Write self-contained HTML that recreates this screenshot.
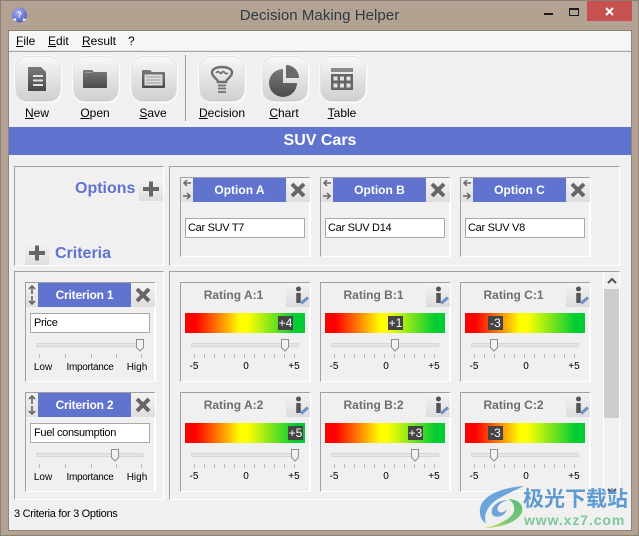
<!DOCTYPE html>
<html><head><meta charset="utf-8">
<style>
html,body{margin:0;padding:0}
body{width:639px;height:536px;position:relative;overflow:hidden;background:#b3a292;font-family:"Liberation Sans","Noto Sans CJK SC",sans-serif;font-size:12px;color:#000}
div,span,svg{position:absolute;box-sizing:border-box}
u{text-decoration:underline}
.tb{width:46px;height:46px;top:56px;border-radius:12px;background:linear-gradient(#f7f7f7,#cfcfd2);border:1px solid #e4e4e4;box-shadow:1px 1px 1px #fff,0 0 0 1px #fafafa}
.tl{top:106px;line-height:14px;white-space:nowrap;transform:translateX(-50%);font-size:12px}
.pn{border-top:1px solid #a0a0a0;border-left:1px solid #a0a0a0;border-right:1px solid #fff;border-bottom:1px solid #fff}
.cd{width:131px;height:100px;border-top:1px solid #a0a0a0;border-left:1px solid #a0a0a0;border-right:2px solid #fff;border-bottom:1px solid #fff}
.hd{left:12px;top:0;width:93px;height:24px;background:#6073cf;color:#fff;font-weight:bold;font-size:12px;text-align:center;line-height:24px}
.ar{left:0;top:0;width:12px;height:24px;background:linear-gradient(#f0f0f0,#e0e0e0)}
.xb{left:105px;top:0;width:24px;height:24px;background:linear-gradient(#f4f4f4,#dedede)}
.in{left:4px;width:120px;height:20px;background:#fff;border:1px solid #a8a8a8;line-height:18px;padding-left:2px;font-size:11px;letter-spacing:-.3px;white-space:nowrap}
.ti{left:0;top:5px;width:105px;text-align:center;font-weight:bold;font-size:12px;color:#6e6e6e;line-height:14px}
.ib{left:105px;top:0;width:24px;height:24px;background:linear-gradient(#f4f4f4,#dcdce0)}
.gr{left:4px;top:30px;width:120px;height:20px;background:linear-gradient(90deg,#f00 9%,#ff8000 28%,#ff0 46%,#ff0 52%,#00cc33 92%)}
.vl{top:3px;width:15px;height:14px;background:#444;color:#fff;font-size:12px;line-height:14px;text-align:center}
.st{height:4px;background:#e4e6e6;border:1px solid #d6d8d8;top:60px}
.sm{top:78px;font-size:10px;line-height:12px;white-space:nowrap;transform:translateX(-50%)}
.cl{top:79px}
</style></head>
<body>
<!-- title bar -->
<div style="left:0;top:0;width:639px;height:1px;background:#8c8074"></div>
<div style="left:0;top:0;width:1px;height:536px;background:#8c8074"></div>
<div style="left:638px;top:0;width:1px;height:536px;background:#8c8074"></div>
<div style="left:0;top:535px;width:639px;height:1px;background:#8c8074"></div>
<svg style="left:11px;top:7px" width="17" height="17" viewBox="0 0 17 17"><defs><radialGradient id="g" cx=".4" cy=".3" r=".8"><stop offset="0" stop-color="#aab0ee"/><stop offset="1" stop-color="#4a52bc"/></radialGradient></defs><circle cx="8.500" cy="8" r="7.500" fill="url(#g)"/><path d="M1.500 13l3-2 1 3zM15.500 13l-3-2-1 3z" fill="#fff"/><text x="8.500" y="10.500" font-size="8" font-weight="bold" fill="#fff" text-anchor="middle" font-family="Liberation Sans">?</text></svg>
<div style="left:0;top:7px;width:639px;text-align:center;font-size:15px;line-height:18px;color:#2d3b46;letter-spacing:.05px">Decision Making Helper</div>
<div style="left:544px;top:13px;width:9px;height:2px;background:#1c1c1c"></div>
<div style="left:569px;top:8px;width:10px;height:8px;border:1px solid #1c1c1c;border-top-width:2px"></div>
<div style="left:587px;top:1px;width:45px;height:20px;background:#c75050"></div>
<svg style="left:605px;top:7px" width="9" height="9" viewBox="0 0 9 9"><path d="M1 1l7 7M8 1l-7 7" stroke="#fff" stroke-width="2"/></svg>

<!-- client -->
<div style="left:9px;top:31px;width:622px;height:499px;background:#f0f0f0"></div>
<div style="left:8px;top:30px;width:1px;height:501px;background:#8f8478"></div>
<div style="left:631px;top:30px;width:1px;height:501px;background:#8f8478"></div>
<div style="left:8px;top:30px;width:624px;height:1px;background:#8f8478"></div>
<div style="left:8px;top:530px;width:624px;height:1px;background:#8f8478"></div>
<div style="left:9px;top:31px;width:622px;height:19px;background:#f5f6f8"></div>
<div style="left:9px;top:50px;width:622px;height:1px;background:#e6e6e6"></div>
<div style="left:9px;top:51px;width:622px;height:1px;background:#a4a4a4"></div>
<span style="left:16px;top:34px;line-height:14px"><u>F</u>ile</span>
<span style="left:48px;top:34px;line-height:14px"><u>E</u>dit</span>
<span style="left:82px;top:34px;line-height:14px"><u>R</u>esult</span>
<span style="left:128px;top:34px;line-height:14px">?</span>

<!-- toolbar -->
<div class="tb" style="left:15px"><svg style="left:-1px;top:-1px" width="46" height="46" viewBox="0 0 46 46"><defs><linearGradient id="d" x1="0" y1="0" x2="0" y2="1"><stop offset="0" stop-color="#7a7a7a"/><stop offset="1" stop-color="#4a4a4a"/></linearGradient></defs><path d="M13 11h13l5 5v19H13z" fill="url(#d)"/><path d="M18 20h10M18 24.500h10M18 29h10" stroke="#e2e2e2" stroke-width="2"/></svg></div>
<div class="tb" style="left:73px"><svg style="left:-1px;top:-1px" width="46" height="46" viewBox="0 0 46 46"><path d="M10 15q0-1 1-1h8l2 2h12q1 0 1 1v14q0 1-1 1H11q-1 0-1-1z" fill="url(#d)"/><path d="M12 16.500h7" stroke="#999" stroke-width="1"/></svg></div>
<div class="tb" style="left:131px"><svg style="left:-1px;top:-1px" width="46" height="46" viewBox="0 0 46 46"><path d="M11 15q0-1 1-1h7l2 2h12q1 0 1 1v14q0 1-1 1H12q-1 0-1-1z" fill="url(#d)"/><rect x="13.500" y="18.500" width="18" height="11" fill="#e0e0e0"/><path d="M15 21h15M15 24h15M15 27h15" stroke="#999" stroke-width="1"/></svg></div>
<div style="left:185px;top:55px;width:1px;height:66px;background:#9a9a9a"></div>
<div class="tb" style="left:199px"><svg style="left:-1px;top:-1px" width="46" height="46" viewBox="0 0 46 46"><path d="M19 26c0-3-6-5-6-9.500 0-3.500 4.500-5.500 10-5.500s10 2 10 5.500c0 4.500-6 6.500-6 9.500z" fill="none" stroke="#707070" stroke-width="2.400"/><path d="M17 17q2-2.500 3.500-.5t2.500 0 2.500 0 3.500.5" fill="none" stroke="#707070" stroke-width="1.700"/><path d="M19 29.500h8M19 32.500h8M19 36h8" stroke="#707070" stroke-width="1.800"/></svg></div>
<div class="tb" style="left:262px"><svg style="left:-1px;top:-1px" width="46" height="46" viewBox="0 0 46 46"><path d="M21 13a14 14 0 1 0 14 14H21z" fill="url(#d)"/><path d="M24 9a13 13 0 0 1 13 13H24z" fill="#6a6a6a"/></svg></div>
<div class="tb" style="left:320px"><svg style="left:-1px;top:-1px" width="46" height="46" viewBox="0 0 46 46"><rect x="11" y="12" width="22" height="4" fill="#8a8a8a"/><rect x="11" y="18" width="22" height="16" fill="#666"/><path d="M13.500 20.500h4v4h-4zM20 20.500h4v4h-4zM26.500 20.500h4v4h-4zM13.500 27.500h4v4h-4zM20 27.500h4v4h-4zM26.500 27.500h4v4h-4z" fill="#e2e2e2"/></svg></div>
<span class="tl" style="left:37px"><u>N</u>ew</span>
<span class="tl" style="left:95px"><u>O</u>pen</span>
<span class="tl" style="left:153px"><u>S</u>ave</span>
<span class="tl" style="left:222px"><u>D</u>ecision</span>
<span class="tl" style="left:284px"><u>C</u>hart</span>
<span class="tl" style="left:342px"><u>T</u>able</span>

<!-- heading -->
<div style="left:9px;top:127px;width:622px;height:28px;background:#6073cf;color:#fff;font-weight:bold;font-size:16px;line-height:27px;text-align:center">SUV Cars</div>

<!-- panels -->
<div class="pn" style="left:14px;top:166px;width:150px;height:100px"></div>
<div class="pn" style="left:169px;top:166px;width:451px;height:100px"></div>
<div class="pn" style="left:14px;top:271px;width:150px;height:229px"></div>
<div class="pn" style="left:169px;top:271px;width:451px;height:229px"></div>
<div style="left:603px;top:272px;width:1px;height:227px;background:#fff"></div>

<span style="left:75px;top:179px;font-size:16px;font-weight:bold;color:#6073cf;line-height:19px">Options</span>
<div style="left:139px;top:177px;width:24px;height:24px;background:linear-gradient(#f4f4f4,#dedede)"><svg style="left:0;top:0" width="24" height="24"><path d="M12 4.500v15M4 12h16" stroke="#666" stroke-width="4"/></svg></div>
<div style="left:25px;top:241px;width:24px;height:24px;background:linear-gradient(#f4f4f4,#dedede)"><svg style="left:0;top:0" width="24" height="24"><path d="M12 4.500v15M4 12h16" stroke="#666" stroke-width="4"/></svg></div>
<span style="left:55px;top:244px;font-size:16px;font-weight:bold;color:#6073cf;line-height:19px">Criteria</span>

<!-- reusable symbols -->
<svg width="0" height="0" style="left:0;top:0"><defs>
<g id="trk"><path d="M13.500 71v4M23.500 71v4M33.500 71v4M43.500 71v4M53.500 71v4M63.500 71v4M73.500 71v4M83.500 71v4M93.500 71v4M103.500 71v4M113.500 71v4" stroke="#bbb" stroke-width="1"/></g>
<g id="thm"><path d="M.5.5h7v8l-3.500 3.500L.5 8.500z" fill="#f2f2f2" stroke="#8f8f8f"/></g>
<g id="inf"><circle cx="12.500" cy="6" r="2.500" fill="#555"/><path d="M12.500 10v10" stroke="#555" stroke-width="4.500"/><path d="M15 20.500L22 14.500" stroke="#6f8fc8" stroke-width="3"/></g>
<g id="updn"><path d="M6 11V3M3 6l3-3 3 3M6 13v8M3 18l3 3 3-3" fill="none" stroke="#666" stroke-width="1.600"/></g>
<g id="lr"><path d="M10 5H3M6 2L3 5l3 3M2 18h7M6 15l3 3-3 3" fill="none" stroke="#666" stroke-width="1.500"/></g>
<g id="xx"><path d="M6 6l12 12M18 6L6 18" stroke="#666" stroke-width="4"/></g>
</defs></svg>

<!-- option cards -->
<div class="cd" style="left:180px;top:177px;height:80px"><div class="ar"><svg style="left:0;top:0" width="12" height="24"><use href="#lr"/></svg></div><div class="hd">Option A</div><div class="xb"><svg style="left:0;top:0" width="24" height="24"><use href="#xx"/></svg></div><div class="in" style="top:40px">Car SUV T7</div></div>
<div class="cd" style="left:320px;top:177px;height:80px"><div class="ar"><svg style="left:0;top:0" width="12" height="24"><use href="#lr"/></svg></div><div class="hd">Option B</div><div class="xb"><svg style="left:0;top:0" width="24" height="24"><use href="#xx"/></svg></div><div class="in" style="top:40px">Car SUV D14</div></div>
<div class="cd" style="left:460px;top:177px;height:80px"><div class="ar"><svg style="left:0;top:0" width="12" height="24"><use href="#lr"/></svg></div><div class="hd">Option C</div><div class="xb"><svg style="left:0;top:0" width="24" height="24"><use href="#xx"/></svg></div><div class="in" style="top:40px">Car SUV V8</div></div>

<!-- criterion cards -->
<div class="cd" style="left:25px;top:282px"><div class="ar"><svg style="left:0;top:0" width="12" height="24"><use href="#updn"/></svg></div><div class="hd" style="letter-spacing:-.2px">Criterion 1</div><div class="xb"><svg style="left:0;top:0" width="24" height="24"><use href="#xx"/></svg></div><div class="in" style="top:30px;padding-left:3px">Price</div>
<div class="st" style="left:10px;width:108px"></div><svg style="left:110px;top:56px" width="8" height="13"><use href="#thm"/></svg>
<svg style="left:0;top:0" width="130" height="98"><path d="M13.500 71v4M39.500 71v4M65.500 71v4M90.500 71v4M115.500 71v4" stroke="#bbb"/></svg>
<span class="sm cl" style="left:17px">Low</span><span class="sm cl" style="left:64px;letter-spacing:-.3px">Importance</span><span class="sm cl" style="left:111px">High</span></div>
<div class="cd" style="left:25px;top:392px"><div class="ar"><svg style="left:0;top:0" width="12" height="24"><use href="#updn"/></svg></div><div class="hd" style="letter-spacing:-.2px">Criterion 2</div><div class="xb"><svg style="left:0;top:0" width="24" height="24"><use href="#xx"/></svg></div><div class="in" style="top:30px;padding-left:3px">Fuel consumption</div>
<div class="st" style="left:10px;width:108px"></div><svg style="left:85px;top:56px" width="8" height="13"><use href="#thm"/></svg>
<svg style="left:0;top:0" width="130" height="98"><path d="M13.500 71v4M39.500 71v4M65.500 71v4M90.500 71v4M115.500 71v4" stroke="#bbb"/></svg>
<span class="sm cl" style="left:17px">Low</span><span class="sm cl" style="left:64px;letter-spacing:-.3px">Importance</span><span class="sm cl" style="left:111px">High</span></div>

<!-- rating cards row 1 -->
<div class="cd" style="left:180px;top:282px"><div class="ti">Rating A:1</div><div class="ib"><svg style="left:0;top:0" width="24" height="24"><use href="#inf"/></svg></div><div class="gr"><div class="vl" style="left:93px">+4</div></div><div class="st" style="left:10px;width:108px"></div><svg style="left:100px;top:56px" width="8" height="13"><use href="#thm"/></svg><svg style="left:0;top:0" width="130" height="98"><use href="#trk"/></svg><span class="sm" style="left:13px;top:78px">-5</span><span class="sm" style="left:65px;top:78px">0</span><span class="sm" style="left:113px;top:78px">+5</span></div>
<div class="cd" style="left:320px;top:282px"><div class="ti">Rating B:1</div><div class="ib"><svg style="left:0;top:0" width="24" height="24"><use href="#inf"/></svg></div><div class="gr"><div class="vl" style="left:63px">+1</div></div><div class="st" style="left:10px;width:108px"></div><svg style="left:70px;top:56px" width="8" height="13"><use href="#thm"/></svg><svg style="left:0;top:0" width="130" height="98"><use href="#trk"/></svg><span class="sm" style="left:13px">-5</span><span class="sm" style="left:65px">0</span><span class="sm" style="left:113px">+5</span></div>
<div class="cd" style="left:460px;top:282px"><div class="ti">Rating C:1</div><div class="ib"><svg style="left:0;top:0" width="24" height="24"><use href="#inf"/></svg></div><div class="gr"><div class="vl" style="left:23px">-3</div></div><div class="st" style="left:10px;width:108px"></div><svg style="left:29px;top:56px" width="8" height="13"><use href="#thm"/></svg><svg style="left:0;top:0" width="130" height="98"><use href="#trk"/></svg><span class="sm" style="left:13px">-5</span><span class="sm" style="left:65px">0</span><span class="sm" style="left:113px">+5</span></div>

<!-- rating cards row 2 -->
<div class="cd" style="left:180px;top:392px"><div class="ti">Rating A:2</div><div class="ib"><svg style="left:0;top:0" width="24" height="24"><use href="#inf"/></svg></div><div class="gr"><div class="vl" style="left:103px">+5</div></div><div class="st" style="left:10px;width:108px"></div><svg style="left:110px;top:56px" width="8" height="13"><use href="#thm"/></svg><svg style="left:0;top:0" width="130" height="98"><use href="#trk"/></svg><span class="sm" style="left:13px">-5</span><span class="sm" style="left:65px">0</span><span class="sm" style="left:113px">+5</span></div>
<div class="cd" style="left:320px;top:392px"><div class="ti">Rating B:2</div><div class="ib"><svg style="left:0;top:0" width="24" height="24"><use href="#inf"/></svg></div><div class="gr"><div class="vl" style="left:83px">+3</div></div><div class="st" style="left:10px;width:108px"></div><svg style="left:90px;top:56px" width="8" height="13"><use href="#thm"/></svg><svg style="left:0;top:0" width="130" height="98"><use href="#trk"/></svg><span class="sm" style="left:13px">-5</span><span class="sm" style="left:65px">0</span><span class="sm" style="left:113px">+5</span></div>
<div class="cd" style="left:460px;top:392px"><div class="ti">Rating C:2</div><div class="ib"><svg style="left:0;top:0" width="24" height="24"><use href="#inf"/></svg></div><div class="gr"><div class="vl" style="left:23px">-3</div></div><div class="st" style="left:10px;width:108px"></div><svg style="left:29px;top:56px" width="8" height="13"><use href="#thm"/></svg><svg style="left:0;top:0" width="130" height="98"><use href="#trk"/></svg><span class="sm" style="left:13px">-5</span><span class="sm" style="left:65px">0</span><span class="sm" style="left:113px">+5</span></div>

<!-- scrollbar -->
<div style="left:604px;top:289px;width:15px;height:129px;background:#cdcdcd"></div>
<svg style="left:607px;top:277px" width="10" height="8"><path d="M1 6l4-4 4 4" fill="none" stroke="#505050" stroke-width="2"/></svg>
<svg style="left:607px;top:487px" width="10" height="8"><path d="M1 2l4 4 4-4" fill="none" stroke="#505050" stroke-width="2"/></svg>

<!-- status -->
<span style="left:14px;top:507px;line-height:14px;font-size:11px;letter-spacing:-.3px">3 Criteria for 3 Options</span>

<!-- watermark -->
<svg style="left:478px;top:485px" width="50" height="46" viewBox="0 0 50 46"><defs><linearGradient id="w" x1="1" y1="0" x2="0" y2="1"><stop offset="0" stop-color="#5fbc78"/><stop offset=".6" stop-color="#7cc878"/><stop offset="1" stop-color="#ece26c"/></linearGradient></defs><path d="M46 1C32 2 10 6 3 20 0 28 3 36 8 38 5 30 10 20 20 14 28 9 38 5 46 1z" fill="#5b9bd5" opacity=".9"/><path d="M14 29C12 22 20 15 30 15 22 17 18 22 20 26 22 29 28 27 28 24 30 30 17 35 14 29z" fill="#5b9bd5" opacity=".9"/><path d="M30 14C40 14 46 20 44 27 41 36 24 43 6 43 20 40 34 34 36 26 37 20 34 16 30 14z" fill="url(#w)"/></svg>
<div style="left:523px;top:487px;font-size:21px;font-weight:bold;color:#5f9bd2;line-height:26px;white-space:nowrap">极光下载站</div>
<div style="left:524px;top:512px;font-size:14px;font-weight:bold;color:#7cc898;line-height:16px;white-space:nowrap;letter-spacing:.9px">www.xz7.com</div>
</body></html>
